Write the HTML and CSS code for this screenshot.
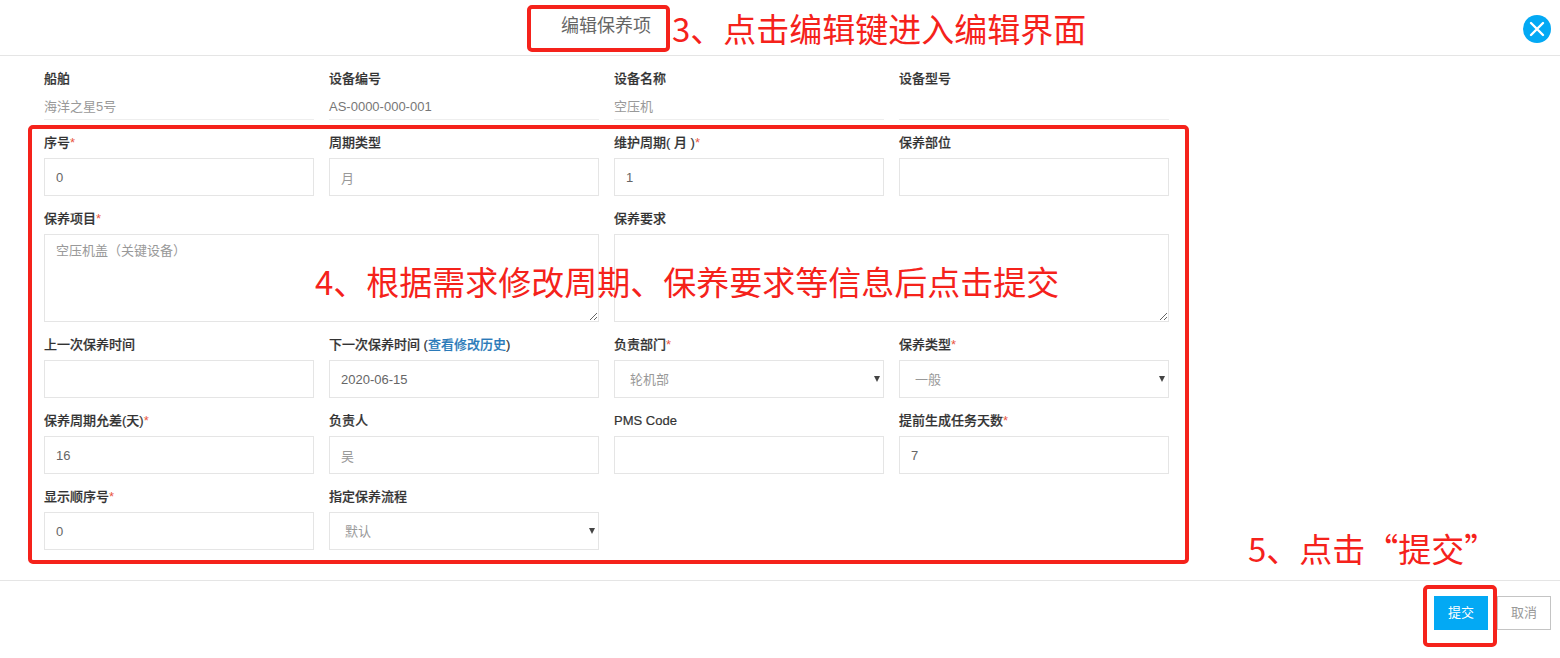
FILE: index.html
```html
<!DOCTYPE html>
<html lang="zh-CN">
<head>
    <meta charset="UTF-8">
    <title>编辑保养项</title>
    <link rel="stylesheet" href="styles.css">
</head>
<body>
    <div class="modal-header">
        <h4 class="modal-title">编辑保养项</h4>
        <span class="close-btn">
            <svg width="28" height="28" viewBox="0 0 28 28">
                <circle cx="14" cy="14" r="14" fill="#03a9f4"/>
                <path d="M8 8 L20 20 M20 8 L8 20" stroke="#fff" stroke-width="2.4" stroke-linecap="round"/>
            </svg>
        </span>
    </div>

    <div class="modal-body">
        <div class="form-grid">
            <div class="field">
                <label>船舶</label>
                <div class="static-value">海洋之星5号</div>
            </div>
            <div class="field">
                <label>设备编号</label>
                <div class="static-value dark">AS-0000-000-001</div>
            </div>
            <div class="field">
                <label>设备名称</label>
                <div class="static-value">空压机</div>
            </div>
            <div class="field">
                <label>设备型号</label>
                <div class="static-value"></div>
            </div>

            <div class="field">
                <label>序号<i>*</i></label>
                <input type="text" value="0">
            </div>
            <div class="field">
                <label>周期类型</label>
                <input class="muted" type="text" value="月">
            </div>
            <div class="field">
                <label>维护周期( 月 )<i>*</i></label>
                <input type="text" value="1">
            </div>
            <div class="field">
                <label>保养部位</label>
                <input type="text">
            </div>

            <div class="field span-2">
                <label>保养项目<i>*</i></label>
                <textarea class="muted">空压机盖（关键设备）</textarea>
            </div>
            <div class="field span-2">
                <label>保养要求</label>
                <textarea></textarea>
            </div>

            <div class="field">
                <label>上一次保养时间</label>
                <input type="text">
            </div>
            <div class="field">
                <label>下一次保养时间 (<a href="#">查看修改历史</a>)</label>
                <input type="text" value="2020-06-15">
            </div>
            <div class="field">
                <label>负责部门<i>*</i></label>
                <div class="select-wrap">
                    <select><option>轮机部</option></select>
                </div>
            </div>
            <div class="field">
                <label>保养类型<i>*</i></label>
                <div class="select-wrap">
                    <select><option>一般</option></select>
                </div>
            </div>

            <div class="field">
                <label>保养周期允差(天)<i>*</i></label>
                <input type="text" value="16">
            </div>
            <div class="field">
                <label>负责人</label>
                <input class="muted" type="text" value="吴">
            </div>
            <div class="field">
                <label>PMS Code</label>
                <input type="text">
            </div>
            <div class="field">
                <label>提前生成任务天数<i>*</i></label>
                <input type="text" value="7">
            </div>

            <div class="field">
                <label>显示顺序号<i>*</i></label>
                <input type="text" value="0">
            </div>
            <div class="field">
                <label>指定保养流程</label>
                <div class="select-wrap">
                    <select><option>默认</option></select>
                </div>
            </div>
        </div>
    </div>

    <div class="modal-footer">
        <button class="btn btn-submit">提交</button>
        <button class="btn btn-cancel">取消</button>
    </div>

    <!-- annotations drawn over the screenshot -->
    <div class="mark mark-title"></div>
    <div class="mark mark-form"></div>
    <div class="mark mark-submit"></div>
    <div class="note note-3">3、点击编辑键进入编辑界面</div>
    <div class="note note-4">4、根据需求修改周期、保养要求等信息后点击提交</div>
    <div class="note note-5">5、点击“提交”</div>
</body>
</html>
```

FILE: styles.css
```css
* {
    box-sizing: border-box;
}
body {
    margin: 0;
    background-color: #fff;
    font-family: "Liberation Sans", "Noto Sans CJK SC", sans-serif;
    font-size: 13px;
    color: #333;
    position: relative;
    height: 658px;
    overflow: hidden;
}
.modal-header {
    height: 56px;
    border-bottom: 1px solid #e5e5e5;
    display: flex;
    align-items: flex-start;
    padding: 14px 9px 0 561px;
}
.modal-title {
    margin: 0;
    font-size: 18px;
    font-weight: 400;
    line-height: 24px;
    color: #666;
}
.close-btn {
    margin-left: auto;
    height: 28px;
    width: 28px;
    margin-top: 1px;
}
.modal-body {
    padding: 13px 0 30px 44px;
    height: 525px;
    border-bottom: 1px solid #e5e5e5;
}
.form-grid {
    display: grid;
    grid-template-columns: repeat(4, 270px);
    column-gap: 15px;
    row-gap: 13px;
}
.span-2 {
    grid-column: span 2;
}
.field label {
    display: block;
    height: 20px;
    line-height: 20px;
    margin-bottom: 5px;
    font-weight: 500;
    color: #333;
    white-space: nowrap;
    -webkit-text-stroke: 0.2px #333;
}
.field label i {
    font-style: normal;
    font-weight: 400;
    color: #e9573f;
    -webkit-text-stroke: 0;
}
.field label a {
    color: #2a7ab9;
    text-decoration: none;
    -webkit-text-stroke: 0.2px #2a7ab9;
}
.static-value {
    height: 26px;
    line-height: 26px;
    border-bottom: 1px solid #eee;
    color: #999;
}
.static-value.dark {
    color: #777;
}
input,
select,
textarea {
    display: block;
    width: 100%;
    height: 38px;
    padding: 0 11px;
    border: 1px solid #e5e5e5;
    border-radius: 0;
    background-color: #fff;
    font-family: inherit;
    font-size: 13px;
    color: #666;
    outline: none;
}
textarea {
    height: 88px;
    padding: 7px 11px;
    line-height: 18px;
}
.muted {
    color: #999;
}
select {
    appearance: none;
    padding: 0 15px;
    color: #999;
}
.select-wrap {
    position: relative;
}
.select-wrap::after {
    content: "";
    position: absolute;
    right: 4px;
    top: 16px;
    border-left: 3px solid transparent;
    border-right: 3px solid transparent;
    border-top: 6px solid #444;
}
.modal-footer {
    display: flex;
    justify-content: flex-end;
    gap: 9px;
    padding: 15px 9px 0 0;
}
.btn {
    width: 54px;
    height: 34px;
    padding: 0 0 3px;
    border: 1px solid transparent;
    border-radius: 0;
    font-family: inherit;
    font-size: 13px;
}
.btn-submit {
    background-color: #03a9f4;
    color: #fff;
}
.btn-cancel {
    background-color: #fff;
    border-color: #c4c4c4;
    color: #999;
}
.mark {
    position: absolute;
    border: 4px solid #f5221b;
    border-radius: 5px;
}
.mark-title {
    left: 527px;
    top: 5px;
    width: 143px;
    height: 47px;
}
.mark-form {
    left: 28px;
    top: 125px;
    width: 1161px;
    height: 439px;
}
.mark-submit {
    left: 1423px;
    top: 585px;
    width: 74px;
    height: 62px;
}
.note {
    position: absolute;
    font-family: "Noto Sans CJK SC", sans-serif;
    font-size: 33px;
    line-height: 40px;
    color: #f5221b;
    white-space: nowrap;
}
.note-3 {
    left: 672px;
    top: 8px;
}
.note-4 {
    left: 315px;
    top: 261px;
}
.note-5 {
    left: 1248px;
    top: 528px;
}
```
